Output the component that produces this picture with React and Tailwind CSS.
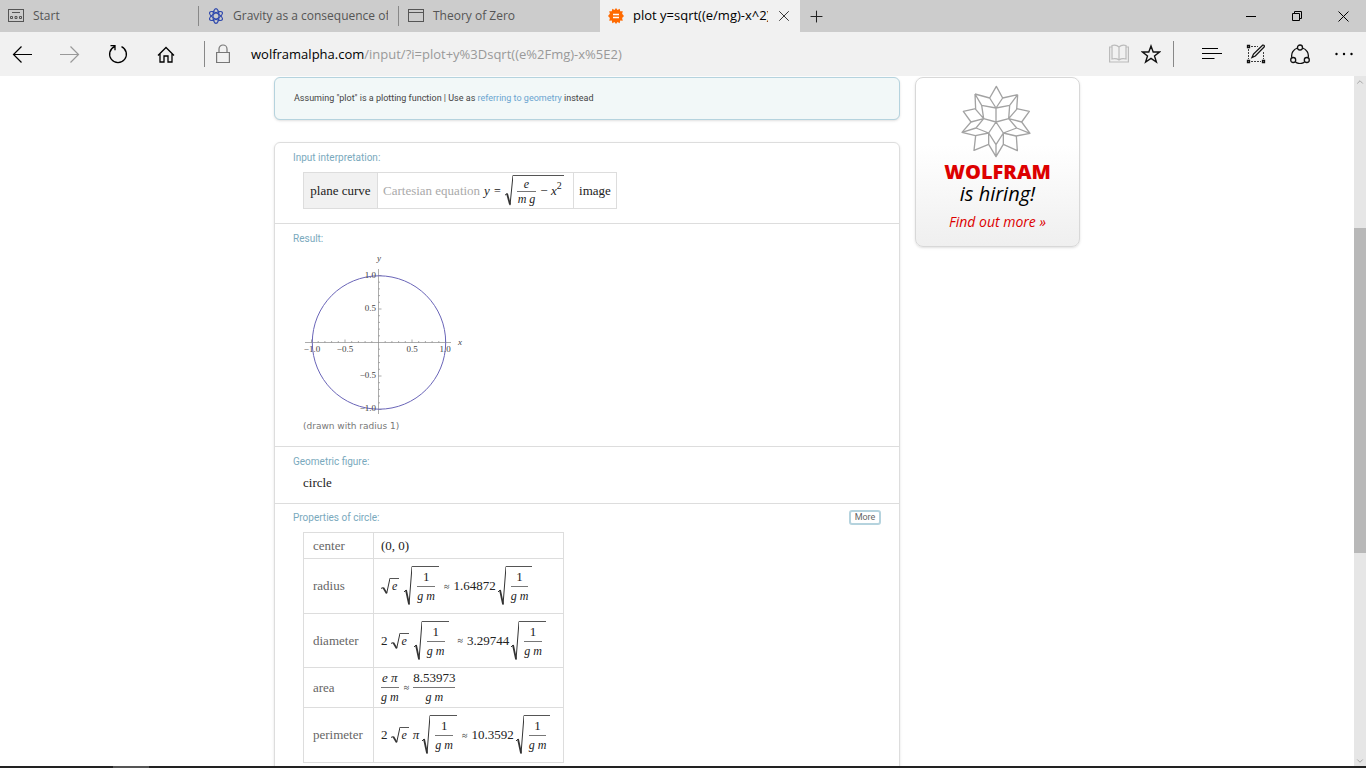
import React from "react";
import { ChevronDown, ChevronUp, Plus, X } from "lucide-react";

const SERIF = "font-['Liberation_Serif',serif]";

/* ---------- math pieces ---------- */

const rootSizes = {
  small: { sign: "h-4 w-[9px]", body: "pl-[2px] pr-[2px]" },
  medium: { sign: "h-[31px] w-2", body: "pl-1 pr-[2px]" },
  large: { sign: "h-10 w-2", body: "pl-[5px] pr-1" },
};

function Sqrt({ children, size = "large" }) {
  const { sign, body } = rootSizes[size];
  return (
    <span className="inline-flex items-stretch">
      <svg viewBox="0 0 8 40" preserveAspectRatio="none" className={`${sign} shrink-0`} fill="none" stroke="#333">
        <path d="M0 26l2-2" vectorEffect="non-scaling-stroke" />
        <path d="M2 24l3 14" strokeWidth="1.8" vectorEffect="non-scaling-stroke" />
        <path d="M5 39L8 0.5" vectorEffect="non-scaling-stroke" />
      </svg>
      <span className={`${body} flex items-center border-t border-[#555]`}>{children}</span>
    </span>
  );
}

function Frac({ top, bottom }) {
  return (
    <span className="inline-flex flex-col items-center">
      <span className="leading-[18px]">{top}</span>
      <span className="w-full border-t border-[#777] text-center leading-[18px]">{bottom}</span>
    </span>
  );
}

const gm = <i className="text-[12px]">g m</i>;

function RootGm() {
  return (
    <Sqrt>
      <Frac top="1" bottom={gm} />
    </Sqrt>
  );
}

function RootE() {
  return (
    <Sqrt size="small">
      <i className="text-[12px] leading-[15px]">e</i>
    </Sqrt>
  );
}

function Approx() {
  return <span className="text-[10px]">≈</span>;
}

/* ---------- browser chrome ---------- */

function WindowIcon({ start }) {
  return (
    <svg width="16" height="14" viewBox="0 0 16 14" fill="none" stroke="#555" className="shrink-0">
      <rect x="0.5" y="0.5" width="15" height="12" />
      {start ? (
        <path d="M4 3.500h8M2.500 7.500h2v2h-2zM7 7.500h2v2H7zM11.500 7.500h2v2h-2z" />
      ) : (
        <path d="M0 3.500h16" />
      )}
    </svg>
  );
}

function AtomIcon() {
  return (
    <svg width="16" height="16" viewBox="0 0 16 16" fill="none" stroke="#2f49ad" strokeWidth="1.2" className="shrink-0">
      <ellipse cx="8" cy="8" rx="3" ry="7.300" />
      <ellipse cx="8" cy="8" rx="3" ry="7.300" transform="rotate(60 8 8)" />
      <ellipse cx="8" cy="8" rx="3" ry="7.300" transform="rotate(120 8 8)" />
    </svg>
  );
}

function AlphaIcon() {
  return (
    <svg width="16" height="16" viewBox="0 0 16 16" className="shrink-0">
      <path
        fill="#ff6a00"
        d="M8 0l1.500 2L11.700.8l.5 2.500 2.600-.1-.7 2.500L16 8l-1.900 2.100.7 2.600-2.600-.1-.5 2.600-2.200-1.300L8 16l-1.500-2.100-2.200 1.300-.5-2.600-2.600.1.700-2.600L0 8l1.900-2.300-.7-2.500 2.600.1.500-2.500L6.500 2z"
      />
      <path d="M5 6.500h6M5 9.500h6" stroke="#fff" strokeWidth="1.300" />
    </svg>
  );
}

function TabBar() {
  return (
    <div className="flex h-8 shrink-0 items-stretch bg-[#ccc] text-[12px] text-[#555]">
      <button className="flex w-[200px] items-center gap-[9px] pl-2">
        <WindowIcon start />
        Start
      </button>
      <button className="flex w-[200px] items-center">
        <span className="mr-[9px] -ml-[2px] h-5 w-px bg-[#888]" />
        <AtomIcon />
        <span className="ml-[9px] w-[155px] overflow-hidden text-left whitespace-nowrap">Gravity as a consequence of</span>
      </button>
      <button className="flex w-[200px] items-center">
        <span className="mr-[9px] -ml-[2px] h-5 w-px bg-[#888]" />
        <WindowIcon />
        <span className="ml-[9px]">Theory of Zero</span>
      </button>
      <div className="flex w-[200px] items-center bg-[#f1f1f1] pl-2 text-[13px] text-black">
        <AlphaIcon />
        <span className="ml-[9px] w-[135px] overflow-hidden whitespace-nowrap">plot y=sqrt((e/mg)-x^2)</span>
        <button aria-label="Close tab" className="ml-[7px]">
          <X size={18} strokeWidth={1.3} color="#333" />
        </button>
      </div>
      <button aria-label="New tab" className="pl-[7px]">
        <Plus size={19} strokeWidth={1.3} color="#222" />
      </button>
      <div className="ml-auto flex text-black">
        <button aria-label="Minimize" className="flex w-[46px] items-center justify-center">
          <svg width="10" height="10" stroke="currentColor">
            <path d="M0 5.500h10" />
          </svg>
        </button>
        <button aria-label="Restore" className="flex w-[46px] items-center justify-center">
          <svg width="10" height="10" fill="none" stroke="currentColor">
            <path d="M0.500 2.500h7v7h-7zM2.500 2.500v-2h7v7h-2" />
          </svg>
        </button>
        <button aria-label="Close" className="flex w-[46px] items-center justify-center">
          <svg width="11" height="11" stroke="currentColor">
            <path d="M0.500 0.500l10 10M10.500 0.500l-10 10" />
          </svg>
        </button>
      </div>
    </div>
  );
}

function Toolbar() {
  return (
    <div className="flex h-11 shrink-0 items-center bg-[#f1f1f1] pl-3">
      <button aria-label="Back">
        <svg width="20" height="18" fill="none" stroke="#000" strokeWidth="1.200">
          <path d="M20 9.500H1.500M9.500 1.500l-8 8 8 8" />
        </svg>
      </button>
      <button aria-label="Forward" className="ml-7">
        <svg width="20" height="18" fill="none" stroke="#999" strokeWidth="1.200">
          <path d="M0 9.500h18.500M10.500 1.500l8 8-8 8" />
        </svg>
      </button>
      <button aria-label="Refresh" className="ml-7">
        <svg width="20" height="20" fill="none" stroke="#000" strokeWidth="1.300">
          <path d="M13.500 2.600A8.400 8.400 0 1 1 6.500 2.600M2.500 1.700h4.500v4.500" />
        </svg>
      </button>
      <button aria-label="Home" className="ml-[29px]">
        <svg width="18" height="18" fill="none" stroke="#000" strokeWidth="1.300">
          <path d="M1 10.500L9 2.500l8 8M3 9v8h4v-6h4v6h4V9" />
        </svg>
      </button>
      <span className="ml-[29px] h-[26px] w-px bg-[#888]" />
      <svg width="14" height="20" fill="none" stroke="#777" strokeWidth="1.200" className="ml-[11px] shrink-0">
        <path d="M0.600 8.500h12.800v10H0.600zM3 8.500V5a4 4 0 0 1 8 0v3.500" />
      </svg>
      <div className="ml-[21px] pt-0.5 text-[13px] whitespace-nowrap text-[#999]">
        <span className="text-black">wolframalpha.com</span>/input/?i=plot+y%3Dsqrt((e%2Fmg)-x%5E2)
      </div>
      <div className="ml-auto flex items-center">
        <svg width="20" height="20" fill="none" stroke="#bbb" strokeWidth="1.200">
          <path d="M10 3v13M10 3C8 1 5 1 3 1.500V15c2-.5 5-.5 7 1 2-1.500 5-1.500 7-1V1.500C15 1 12 1 10 3M3 3H.6v15h18.800V3H17" />
        </svg>
        <button aria-label="Add to favorites" className="ml-3">
          <svg width="20" height="20" fill="none" stroke="#111" strokeWidth="1.400">
            <path d="M10 2l2.200 6h6.300l-5 3.900 1.900 6.100-5.400-3.700L4.600 18l1.900-6.100-5-3.900h6.300z" />
          </svg>
        </button>
        <span className="ml-3 h-[26px] w-px bg-[#888]" />
        <button aria-label="Hub" className="ml-7">
          <svg width="20" height="14" stroke="#000" strokeWidth="1.200">
            <path d="M0 1.500h16M0 6.500h20M0 11.500h12.500" />
          </svg>
        </button>
        <button aria-label="Make a web note" className="ml-6">
          <svg width="20" height="20" fill="none" stroke="#111">
            <path d="M5 2.500h7M2.500 5v10M5 17.500h10M17.500 8v7" strokeDasharray="2 1" strokeWidth="0.8" />
            <path d="M1.500 1.500h2v2h-2zM1.500 16.500h2v2h-2zM16.500 16.500h2v2h-2z" strokeWidth="1.300" />
            <path d="M6 13.500l1.500-3.500L16.500 1.200c1.500-.5 2.200.5 1.700 1.700L9.300 12z" strokeWidth="1.300" />
          </svg>
        </button>
        <button aria-label="Share" className="ml-6">
          <svg width="20" height="20" fill="none" stroke="#111" strokeWidth="1.300">
            <circle cx="10" cy="3.500" r="2.500" />
            <circle cx="3.200" cy="16" r="2.500" />
            <circle cx="16.800" cy="16" r="2.500" />
            <path d="M7.500 4a8.200 8.200 0 0 0-5.700 9.500M12.500 4a8.200 8.200 0 0 1 5.700 9.500M5.400 18a8.200 8.200 0 0 0 9.200 0" />
          </svg>
        </button>
        <button aria-label="More actions" className="mr-[13px] ml-[25px]">
          <svg width="18" height="4">
            <circle cx="1.500" cy="2" r="1.200" />
            <circle cx="9" cy="2" r="1.200" />
            <circle cx="16.500" cy="2" r="1.200" />
          </svg>
        </button>
      </div>
    </div>
  );
}

/* ---------- page ---------- */

function Heading({ children }) {
  return <h2 className="font-[Roboto,sans-serif] text-[10px] leading-3 text-[#7aa9bd]">{children}</h2>;
}

function InputTable() {
  return (
    <table className={`${SERIF} mt-2 ml-[10px] h-[37px] border-collapse text-[13px] leading-4 text-[#222]`}>
      <tbody>
        <tr>
          <td className="w-[74px] border border-[#ddd] bg-[#f1f1f1] text-center whitespace-nowrap">plane curve</td>
          <td className="w-[196px] border border-[#ddd] px-[5px]">
            <span className="flex items-center whitespace-nowrap">
              <span className="mr-1 text-[#aaa]">Cartesian equation</span>
              <i>y</i>
              <span className="mx-1 text-[12px]">=</span>
              <Sqrt size="medium">
                <span className="inline-flex flex-col items-center text-[12px] leading-[14px]">
                  <i>e</i>
                  <i className="border-t border-[#777] px-px">m g</i>
                </span>
                <span className="ml-1">
                  − <i>x</i>
                </span>
                <sup className="text-[10px]">2</sup>
              </Sqrt>
            </span>
          </td>
          <td className="w-[43px] border border-[#ddd] text-center">image</td>
        </tr>
      </tbody>
    </table>
  );
}

const ticks = Array.from({ length: 21 }, (_, i) => i - 10).filter((i) => i !== 0);

function CirclePlot() {
  return (
    <svg width="164" height="164" viewBox="0 0 164 164" className={`${SERIF} mt-2 ml-[10px] block text-[9px]`} fill="#444">
      <g stroke="#888" strokeWidth="0.7" fill="none">
        <path d="M2 89.500h146M75.500 16v145" />
        {ticks.map((i) => (
          <path
            key={i}
            d={`M${75.5 + i * 6.7} 89.500v-${i % 5 ? 1.5 : 3}M75.500 ${89.5 + i * 6.7}h${i % 5 ? 1.5 : 3}`}
          />
        ))}
      </g>
      <circle cx="76" cy="89.500" r="66.700" fill="none" stroke="#6a65b8" />
      <g textAnchor="middle">
        <text x="9" y="99">−1.0</text>
        <text x="42" y="99">−0.5</text>
        <text x="109" y="99">0.5</text>
        <text x="142" y="99">1.0</text>
        <text x="157" y="92" fontStyle="italic">x</text>
        <text x="76" y="8" fontStyle="italic">y</text>
      </g>
      <g textAnchor="end">
        <text x="73" y="25">1.0</text>
        <text x="73" y="58">0.5</text>
        <text x="73" y="125">−0.5</text>
        <text x="73" y="158">−1.0</text>
      </g>
    </svg>
  );
}

const properties = [
  { name: "center", height: "h-[26px]", value: "(0, 0)" },
  {
    name: "radius",
    height: "h-[55px]",
    value: (
      <>
        <RootE />
        <span className="w-[5px]" />
        <RootGm />
        <span className="w-[5px]" />
        <Approx />
        <span className="mr-0.5 ml-1">1.64872</span>
        <RootGm />
      </>
    ),
  },
  {
    name: "diameter",
    height: "h-[54px]",
    value: (
      <>
        <span className="mr-[3px]">2</span>
        <RootE />
        <span className="w-[5px]" />
        <RootGm />
        <span className="w-[9px]" />
        <Approx />
        <span className="mr-0.5 ml-1">3.29744</span>
        <RootGm />
      </>
    ),
  },
  {
    name: "area",
    height: "h-10",
    value: (
      <>
        <Frac top={<i>e π</i>} bottom={gm} />
        <span className="w-[5px]" />
        <Approx />
        <span className="w-1" />
        <Frac top="8.53973" bottom={gm} />
      </>
    ),
  },
  {
    name: "perimeter",
    height: "h-[55px]",
    value: (
      <>
        <span className="mr-[3px]">2</span>
        <RootE />
        <i className="mr-[3px] ml-1">π</i>
        <RootGm />
        <span className="w-[5px]" />
        <Approx />
        <span className="mr-0.5 ml-1">10.3592</span>
        <RootGm />
      </>
    ),
  },
];

function PropertiesTable() {
  return (
    <table className={`${SERIF} mt-[7px] ml-[10px] border-collapse text-[13px] text-[#222]`}>
      <tbody>
        {properties.map((p) => (
          <tr key={p.name} className={p.height}>
            <th className="w-[70px] border border-[#ddd] pl-[9px] text-left font-normal text-[#666]">{p.name}</th>
            <td className="w-[190px] border border-[#ddd] pl-[7px]">
              <span className="flex items-center whitespace-nowrap">{p.value}</span>
            </td>
          </tr>
        ))}
      </tbody>
    </table>
  );
}

function Spikey() {
  return (
    <svg width="80" height="76" viewBox="0 2 240 228" fill="none" stroke="#a3a3a3" strokeWidth="4" strokeLinejoin="round" className="mr-1 shrink-0">
      <path d="M121 15L101 50l19 30 20-30zM57 38l44 12M57 38l20 34 43 8v42l-37-10-6-40M57 38l2 46 24 28M185 40l-45 10M185 40l-24 32-41 8M161 72l-3 40-38 10M185 40l-3 44-24 28" />
      <path d="M59 82l-37 8 23 32 38-10-23 28-42 13 27-31M18 153l40 10 40-8-38-15M182 82l38 8-23 32-39-10 24 28 40 16-25-34M222 156l-42 8-38-9 40-15" />
      <path d="M120 122l-22 33 22 35 22-35zM98 155v34l22 37 22-37v-34M120 190v36M59 163l-5 44 44-18M181 164l3 44-42-19" />
    </svg>
  );
}

function HiringCard() {
  return (
    <a
      href="#"
      className="mt-px flex h-[170px] w-[165px] shrink-0 flex-col items-center rounded-lg border border-[#d8d8d8] bg-linear-to-b from-white from-40% to-[#efefef] pt-1 font-['Open_Sans',sans-serif] shadow"
    >
      <Spikey />
      <span className="mt-0.5 text-[20px] leading-6 font-extrabold text-[#d00]">WOLFRAM</span>
      <span className="text-[20px] leading-5 text-black italic">is hiring!</span>
      <span className="mt-2 text-[14px] leading-5 text-[#d00] italic">Find out more »</span>
    </a>
  );
}

function App() {
  return (
    <div className="flex h-screen flex-col overflow-hidden bg-white font-['Open_Sans',sans-serif]">
      <TabBar />
      <Toolbar />
      <div className="flex min-h-0 flex-1">
        <main className="min-w-0 flex-1 overflow-hidden">
          <div className="mx-auto flex max-w-[806px] items-start gap-[15px]">
            <div className="min-w-0 flex-1">
              <div className="mt-px flex h-[43px] items-center rounded-md border border-[#b5d3de] bg-[#f2f8f8] pl-[19px] font-[Roboto,sans-serif] text-[9px] text-[#444] shadow-sm">
                <p>
                  Assuming "plot" is a plotting function | Use as{" "}
                  <a href="#" className="text-[#6ba5d0]">referring to geometry</a> instead
                </p>
              </div>

              <div className="mt-[22px] rounded-t-md border border-[#ddd] shadow">
                <section className="h-[81px] border-b border-[#ddd] pt-[9px] pl-[18px]">
                  <Heading>Input interpretation:</Heading>
                  <InputTable />
                </section>
                <section className="h-[223px] border-b border-[#ddd] pt-[9px] pl-[18px]">
                  <Heading>Result:</Heading>
                  <CirclePlot />
                  <p className="mt-[3px] ml-[10px] font-['DejaVu_Sans',sans-serif] text-[9px] leading-3 text-[#777]">(drawn with radius 1)</p>
                </section>
                <section className="h-[57px] border-b border-[#ddd] pt-[9px] pl-[18px]">
                  <Heading>Geometric figure:</Heading>
                  <p className={`${SERIF} mt-[7px] ml-[10px] text-[13px] leading-4 text-[#222]`}>circle</p>
                </section>
                <section className="pt-[6px] pr-[18px] pb-6 pl-[18px]">
                  <div className="flex items-center justify-between">
                    <Heading>Properties of circle:</Heading>
                    <button className="h-[15px] w-8 rounded-[3px] border-2 border-[#b5d3de] font-[Roboto,sans-serif] text-[9px] leading-[11px] text-[#666]">
                      More
                    </button>
                  </div>
                  <PropertiesTable />
                </section>
              </div>
            </div>
            <HiringCard />
          </div>
        </main>

        <div className="flex w-3 shrink-0 flex-col items-center bg-[#e6e6e6]">
          <ChevronUp size={10} color="#999" className="my-px" />
          <div className="mt-[140px] h-[325px] w-full bg-[#b8b8b8]" />
          <ChevronDown size={10} color="#999" className="mt-auto" />
        </div>
      </div>
      <div className="h-0.5 shrink-0 bg-[#222]">
        <div className="ml-[113px] h-full w-9 bg-[#555]" />
      </div>
    </div>
  );
}

export default App;
